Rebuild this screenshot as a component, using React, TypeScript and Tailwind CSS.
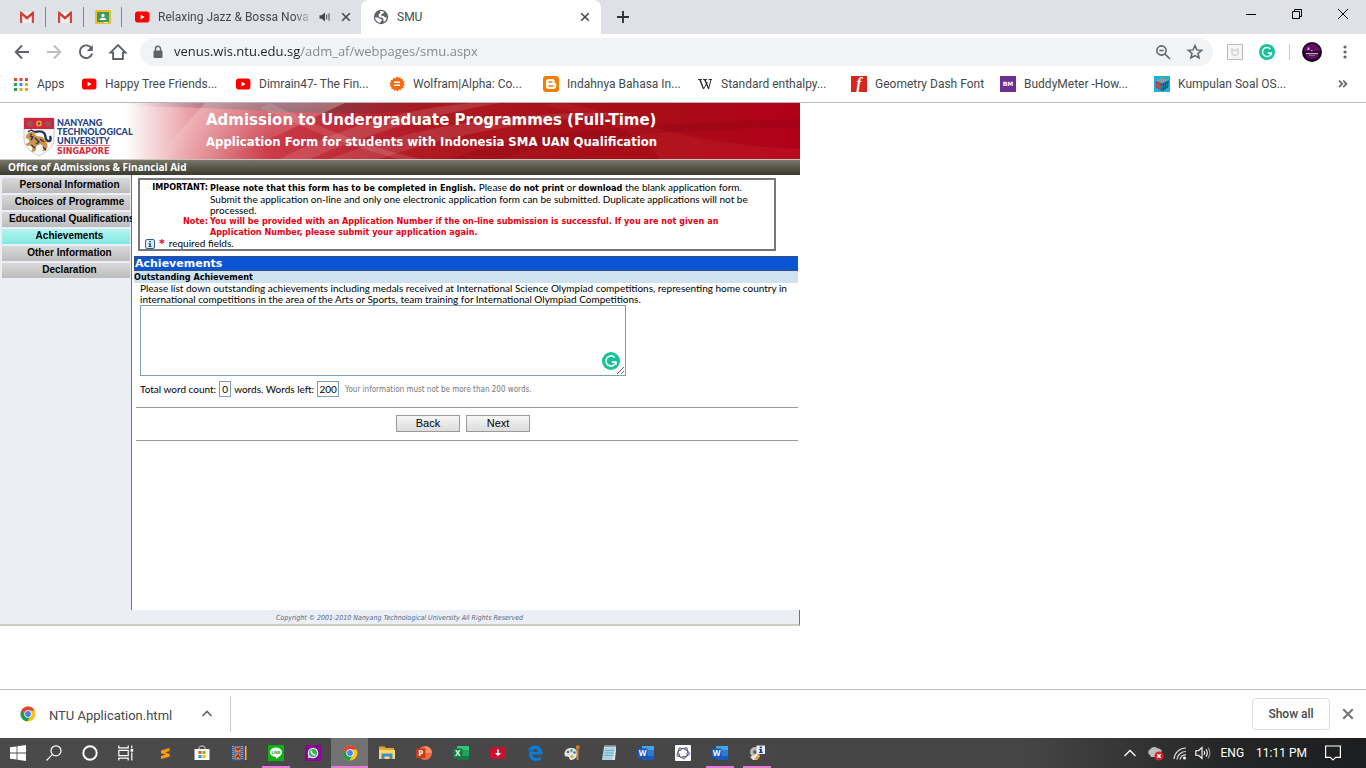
import React, { useState } from "react";

type IconProps = { className?: string };

const YouTube = ({ className = "h-4 w-4" }: IconProps) => (
  <svg viewBox="0 0 16 16" className={className} aria-hidden="true">
    <rect x="1" y="2.6" width="14.4" height="11" rx="2.8" fill="#f00" />
    <path d="M6.6 5.8v4.6l4-2.3z" fill="#fff" />
  </svg>
);

const Gmail = () => (
  <svg viewBox="0 0 16 16" className="h-4 w-4" aria-hidden="true">
    <path d="M1 3h14v11H1z" fill="#f1efee" />
    <path d="M1 14V3.2L8 9l7-5.8V14h-2.2V6.6L8 10.8 3.2 6.6V14z" fill="#d4453a" />
    <path d="M1 3.3V2.6h1.2L8 7.4l5.8-4.8H15v1.6L8 10z" fill="#c7392f" />
  </svg>
);

const Classroom = () => (
  <svg viewBox="0 0 16 16" className="h-4 w-4" aria-hidden="true">
    <rect x="0" y="1" width="16" height="14" rx="1.2" fill="#f2bd2c" />
    <rect x="2" y="3" width="12" height="10" fill="#3c9a5a" />
    <circle cx="8" cy="6.4" r="1.6" fill="#fff" />
    <path d="M4.6 11c.3-1.6 1.8-2.2 3.4-2.2s3.1.6 3.4 2.2z" fill="#fff" />
    <path d="M9 13h3.5v1H9z" fill="#fff" />
  </svg>
);

const Globe = () => (
  <svg viewBox="0 0 16 16" className="h-4 w-4" aria-hidden="true">
    <circle cx="8" cy="8" r="7.2" fill="#5f6368" />
    <path d="M2 8.2 5 8.400l1.500 1.300 2 .3.300 1.500-1.700 1.700v.8C4.400 13.500 2.200 11.300 2 8.200zM7 2.300c1.500-.5 3-.2 4.200.6L10 4.600 8.300 5v1.700l2.600.4 1 1.500 1.900-.4c-.2 2-1.300 3.600-2.600 4.500l-1-.9.300-1.800-1.500-1.500H6.800L5.500 7l.3-2 1.600-.8z" fill="#fff" />
  </svg>
);

const Cross = ({ className = "h-4 w-4" }: IconProps) => (
  <svg viewBox="0 0 16 16" className={className} fill="none" stroke="currentColor" strokeWidth="1.6" aria-hidden="true">
    <path d="m4.200 4.200 7.600 7.600M11.800 4.200l-7.600 7.600" />
  </svg>
);

const Grammarly = ({ className = "h-4 w-4" }: IconProps) => (
  <svg viewBox="0 0 16 16" className={className} aria-hidden="true">
    <circle cx="8" cy="8" r="8" fill="#15c39a" />
    <path d="M11.300 4.900A4.500 4.500 0 1 0 12.400 9H8.800M12.400 8.900v2.400" fill="none" stroke="#fff" strokeWidth="1.400" />
  </svg>
);

const Chrome = ({ className = "h-4 w-4" }: IconProps) => (
  <svg viewBox="0 0 16 16" className={className} aria-hidden="true">
    <circle cx="8" cy="8" r="7.500" fill="#fbc116" />
    <path d="M1.500 4.250A7.500 7.500 0 0 0 7.300 15.460L10.900 9.700 8 8 5 9.700z" fill="#1b9a57" />
    <path d="M8 4.600h6.660A7.500 7.500 0 0 0 1.500 4.250L5 9.700z" fill="#dc4437" />
    <circle cx="8" cy="8" r="3.700" fill="#fff" />
    <circle cx="8" cy="8" r="2.900" fill="#4385f4" />
  </svg>
);

const AppsGrid = () => (
  <svg viewBox="0 0 16 16" className="h-4 w-4" aria-hidden="true">
    <path d="M1 2h3v3H1zM6.500 2h3v3h-3zM12 2h3v3h-3z" fill="#db4437" />
    <path d="M1 7h3v3H1zM1 12h3v3H1z" fill="#27a05b" />
    <path d="M6.500 7h3v3h-3z" fill="#4285f4" />
    <path d="M12 7h3v3h-3zM6.500 12h3v3h-3zM12 12h3v3h-3z" fill="#e9a820" />
  </svg>
);

const Wolfram = () => (
  <svg viewBox="0 0 16 16" className="h-4 w-4" aria-hidden="true">
    <path
      d="m8 .2 1.300 1.700L11.200.900l.6 2 2.100-.1-.2 2.100 2 .7L14.600 7.400 16 9l-1.900 1 .5 2.100-2.100.1-.4 2.100-2-.7L8.500 15.500 7 14l-1.900.9-.7-2-2.100.1.200-2.100-2-.8 1.200-1.700L.200 6.900l1.900-1-.5-2 2.100-.2.500-2 1.900.7z"
      fill="#f96a10"
    />
    <path d="M5 5.500h6V7H5zM5 8.500h6V10H5z" fill="#fff" />
  </svg>
);

const Blogger = () => (
  <svg viewBox="0 0 16 16" className="h-4 w-4" aria-hidden="true">
    <rect width="16" height="16" rx="3" fill="#f57d00" />
    <path d="M6 3h2.800a3 3 0 0 1 3 3v.4c0 .6.400.8.900.8.400 0 .6.200.6.600v2a3.200 3.200 0 0 1-3.200 3.200H6A3 3 0 0 1 3 10V6a3 3 0 0 1 3-3z" fill="#fff" />
    <path d="M6 6h2.600M6 10h4" stroke="#f57d00" strokeWidth="1.500" strokeLinecap="round" />
  </svg>
);

const WikiW = () => (
  <svg viewBox="0 0 16 16" className="h-4 w-4" aria-hidden="true">
    <path d="M1 3.500h4M6 3.500h4M11.500 3.500H15M2.800 3.500 6.500 13l4-7M7.600 3.500l4 9.500 2.400-9.500" fill="none" stroke="#222" strokeWidth=".9" />
    <path d="M2.300 3.500h1.400l2.900 8-.4 1.500zM7.100 3.500h1.400l3.200 8-.4 1.500z" fill="#222" />
  </svg>
);

const FontF = () => (
  <svg viewBox="0 0 16 16" className="h-4 w-4" aria-hidden="true">
    <rect width="16" height="16" fill="#d9261c" />
    <text x="8" y="12.800" textAnchor="middle" fontFamily="Liberation Serif, serif" fontSize="16" fontStyle="italic" fontWeight="700" fill="#fff">f</text>
  </svg>
);

const Buddy = () => (
  <svg viewBox="0 0 16 16" className="h-4 w-4" aria-hidden="true">
    <rect width="16" height="16" fill="#6e2f93" />
    <text x="8" y="10" textAnchor="middle" fontFamily="DejaVu Sans, sans-serif" fontSize="6" fontWeight="700" fill="#fff">BM</text>
  </svg>
);

const Cube = () => (
  <svg viewBox="0 0 16 16" className="h-4 w-4" aria-hidden="true">
    <rect width="16" height="16" fill="#16b3d8" />
    <path d="m2 4.500 6-3 6.500 2.200L8.500 7z" fill="#8e9aa3" />
    <path d="M1.500 5 8 7.500V15l-6-3.500z" fill="#d8242f" />
    <path d="m8.500 7.500 6.300-3L14 11.500 8.500 15z" fill="#173f63" />
    <path d="m1.800 8.300 6.200 3M4 6v6.500M6 7v7M8.500 11l6-3.300M10.500 6.500v7M12.500 5.500v7" stroke="#16b3d8" strokeWidth=".5" />
  </svg>
);

const bookmarks: { label: string; icon: React.ReactNode; width: string }[] = [
  { label: "Happy Tree Friends...", icon: <YouTube />, width: "w-[154px]" },
  { label: "Dimrain47- The Fin...", icon: <YouTube />, width: "w-[154px]" },
  { label: "Wolfram|Alpha: Co...", icon: <Wolfram />, width: "w-[154px]" },
  { label: "Indahnya Bahasa In...", icon: <Blogger />, width: "w-[154px]" },
  { label: "Standard enthalpy...", icon: <WikiW />, width: "w-[154px]" },
  { label: "Geometry Dash Font", icon: <FontF />, width: "w-[149px]" },
  { label: "BuddyMeter -How...", icon: <Buddy />, width: "w-[154px]" },
  { label: "Kumpulan Soal OS...", icon: <Cube />, width: "w-[154px]" },
];

function TabStrip() {
  return (
    <header className="flex h-[34px] items-stretch bg-[#dee1e6] text-[12px] text-[#45494d]">
      <div className="flex items-center pl-2">
        {[
          { name: "Gmail", icon: <Gmail /> },
          { name: "Gmail inbox", icon: <Gmail /> },
          { name: "Classroom", icon: <Classroom /> },
        ].map((t) => (
          <button key={t.name} aria-label={t.name} className="flex h-5 w-[38px] items-center justify-center border-r border-[#83868b]">
            {t.icon}
          </button>
        ))}
      </div>
      <div className="flex w-[239px] items-center pr-[7px] pl-3">
        <YouTube />
        <span className="ml-2 w-[155px] overflow-hidden whitespace-nowrap [mask-image:linear-gradient(to_right,#000_88%,transparent)]">
          Relaxing Jazz &amp; Bossa Nova M
        </span>
        <button aria-label="Mute tab" className="ml-1">
          <svg viewBox="0 0 16 16" className="h-4 w-4" aria-hidden="true">
            <path d="M2.500 6.200h2.200L8 3.500v9L4.700 9.800H2.500z" fill="#45494d" />
            <path d="M9.700 5.500v5M12 4.300v7.400" stroke="#45494d" strokeWidth="1" />
          </svg>
        </button>
        <button aria-label="Close tab" className="ml-auto">
          <Cross />
        </button>
      </div>
      <div className="flex w-[240px] items-center rounded-t-lg bg-white px-2">
        <span className="ml-1">
          <Globe />
        </span>
        <span className="ml-2">SMU</span>
        <button aria-label="Close SMU" className="ml-auto">
          <Cross />
        </button>
      </div>
      <button aria-label="New tab" className="ml-3.5 text-[#333]">
        <svg viewBox="0 0 16 16" className="h-4 w-4" stroke="currentColor" strokeWidth="1.900" aria-hidden="true">
          <path d="M8 2v12M2 8h12" />
        </svg>
      </button>
      <div className="ml-auto flex h-7 text-black">
        <button aria-label="Minimize" className="flex w-[46px] items-center justify-center">
          <svg viewBox="0 0 12 12" className="h-3 w-3" aria-hidden="true">
            <path d="M1 6h10v1H1z" />
          </svg>
        </button>
        <button aria-label="Restore" className="flex w-[46px] items-center justify-center">
          <svg viewBox="0 0 12 12" className="h-3 w-3" fill="none" stroke="currentColor" aria-hidden="true">
            <path d="M1.500 3.500h7v7h-7zM3.500 3.500v-2h7v7h-2" />
          </svg>
        </button>
        <button aria-label="Close window" className="flex w-[46px] items-center justify-center">
          <svg viewBox="0 0 12 12" className="h-3 w-3" fill="none" stroke="currentColor" aria-hidden="true">
            <path d="m1 1 10 10M11 1 1 11" />
          </svg>
        </button>
      </div>
    </header>
  );
}

function Toolbar() {
  const [url, setUrl] = useState("venus.wis.ntu.edu.sg/adm_af/webpages/smu.aspx");
  return (
    <div className="flex h-9 items-center bg-white pr-[13px] pl-3 text-[#5f6368]">
      <nav className="flex items-center gap-3" aria-label="Browser">
        <button aria-label="Back" className="h-5 w-5">
          <svg viewBox="0 0 20 20" className="h-5 w-5" fill="none" stroke="currentColor" strokeWidth="1.900">
            <path d="M17 10H4M10 3.500 3.700 10l6.300 6.500" />
          </svg>
        </button>
        <button aria-label="Forward" className="h-5 w-5 text-[#babcbe]">
          <svg viewBox="0 0 20 20" className="h-5 w-5" fill="none" stroke="currentColor" strokeWidth="1.900">
            <path d="M3 10h13M10 3.500l6.300 6.500-6.300 6.500" />
          </svg>
        </button>
        <button aria-label="Reload" className="h-5 w-5">
          <svg viewBox="0 0 20 20" className="h-5 w-5" fill="none" stroke="currentColor" strokeWidth="1.900">
            <path d="M15.500 6.300A6.300 6.300 0 1 0 16.200 11.500" />
            <path d="M16.800 3v6h-6z" fill="currentColor" stroke="none" />
          </svg>
        </button>
        <button aria-label="Home" className="h-5 w-5">
          <svg viewBox="0 0 20 20" className="h-5 w-5" fill="none" stroke="currentColor" strokeWidth="1.900">
            <path d="M2.500 10.600 10 3l7.500 7.600h-2.600V17H5.100v-6.400z" />
          </svg>
        </button>
      </nav>
      <div className="ml-3 flex h-7 grow items-center rounded-full bg-[#f1f3f4] pr-2 pl-2.5">
        <svg viewBox="0 0 16 16" className="h-4 w-4" aria-hidden="true">
          <rect x="3.500" y="6.500" width="9" height="7.500" rx="1" fill="#5f6368" />
          <path d="M5.500 7V4.700a2.500 2.500 0 0 1 5 0V7" fill="none" stroke="#5f6368" strokeWidth="1.400" />
        </svg>
        <input
          aria-label="Address"
          value={url}
          onChange={(e) => setUrl(e.target.value)}
          className="ml-2 grow bg-[linear-gradient(to_right,#202124_126px,#80868b_126px)] bg-clip-text font-['Open_Sans',sans-serif] text-[13px] text-transparent caret-black outline-none"
        />
        <button aria-label="Zoom" className="h-5 w-5">
          <svg viewBox="0 0 20 20" className="h-5 w-5" fill="none" stroke="currentColor" strokeWidth="1.600">
            <circle cx="8.500" cy="8.500" r="4.600" />
            <path d="m12 12 5 5M6.300 8.500h4.400" />
          </svg>
        </button>
        <button aria-label="Bookmark this page" className="ml-3 h-5 w-5">
          <svg viewBox="0 0 20 20" className="h-5 w-5" fill="none" stroke="currentColor" strokeWidth="1.500">
            <path d="m10 3.600 1.900 4.300 4.700.4-3.600 3.100 1.100 4.600-4.100-2.400L5.900 16 7 11.400 3.400 8.300l4.700-.4z" />
          </svg>
        </button>
      </div>
      <button aria-label="Shield extension" className="ml-3.5 h-4 w-4">
        <svg viewBox="0 0 16 16" className="h-4 w-4" fill="#f6f6f6" stroke="#b9bbbd">
          <path d="M.5.500h15v15H.500z" />
          <path d="M5 5v5l3 1.800 3-1.800V5L8 6.500z" fill="none" stroke="#d5d5d5" strokeWidth="1.500" />
        </svg>
      </button>
      <button aria-label="Grammarly" className="ml-4 h-4 w-4">
        <Grammarly />
      </button>
      <span className="mr-3 ml-3.5 h-4 w-px bg-[#c6c8ca]" />
      <button aria-label="Profile" className="h-5 w-5">
        <svg viewBox="0 0 20 20" className="h-5 w-5">
          <circle cx="10" cy="10" r="10" fill="#1c0520" />
          <path d="M2 7a9 9 0 0 1 16 0l-2 8a9 9 0 0 1-12 0z" fill="#660a68" />
          <path d="M3 9h14v4H3z" fill="#2c0a30" />
          <path d="M5.500 5.500h2v2.500h-2zM9 8h1.500v1H9zM4 11h12v1.200H4zM7 13.500h6v.6H7z" fill="#d9a9da" />
        </svg>
      </button>
      <button aria-label="Menu" className="ml-[15px] h-5 w-4">
        <svg viewBox="0 0 16 20" className="h-5 w-4" fill="currentColor">
          <circle cx="8" cy="5" r="1.600" />
          <circle cx="8" cy="10" r="1.600" />
          <circle cx="8" cy="15" r="1.600" />
        </svg>
      </button>
    </div>
  );
}

function BookmarkBar() {
  return (
    <nav aria-label="Bookmarks" className="flex h-[33px] items-center overflow-hidden border-b border-[#b6b7ba] bg-white pb-1 pl-[13px] text-[12px] whitespace-nowrap text-[#45494d]">
      <a href="#apps" className="flex w-[68px] shrink-0 items-center gap-2">
        <AppsGrid />
        Apps
      </a>
      {bookmarks.map((b) => (
        <a key={b.label} href="#bookmark" className={`flex shrink-0 items-center gap-2 ${b.width}`}>
          {b.icon}
          {b.label}
        </a>
      ))}
      <button aria-label="More bookmarks" className="mr-[18px] ml-auto">
        <svg viewBox="0 0 10 10" className="h-2.5 w-2.5" fill="none" stroke="#5f6368" strokeWidth="1.700">
          <path d="m1 1.500 3.200 3.300L1 8.200M5.200 1.500l3.200 3.300-3.200 3.400" />
        </svg>
      </button>
    </nav>
  );
}

const Crest = () => (
  <svg viewBox="0 0 32 40" className="h-10 w-8" role="img" aria-label="University crest">
    <path d="M1 1h30v21c0 9-8 13-15 17C9 35 1 31 1 22z" fill="#fbfafa" stroke="#b8b8c4" strokeWidth=".8" />
    <path d="M1 1h30v11H1z" fill="#d5223f" />
    <path d="M3.500 6.500l2-2.500h3l2 2.500-2 3h-3zM21.500 6.500l2-2.500h3l2 2.500-2 3h-3z" fill="#8f5a55" />
    <circle cx="16" cy="6.500" r="3" fill="#e0a13a" />
    <circle cx="16" cy="6.500" r="1.200" fill="#7b3b32" />
    <path d="M12 15c4-1 7-1 9 1 3 3 0 7 4 8 3 1 3-3 2-5" fill="none" stroke="#24345c" strokeWidth="2.400" />
    <path d="M3.500 18c2-3 6-4 8-2l2 3 6 1 4 4 1 6-2 4h-3l1-4-3-3-4 2-1 5-4 1 1-4-1-3-4 1-2-2 4-2-1-3-3-1z" fill="#cf9345" />
    <path d="M7 19l3 1-2 3M12 21l4 4-3 2M17 22l4 3M8 28l4 3M20 30l3 3M5 15l3-2 4 2" fill="none" stroke="#24345c" strokeWidth="1.400" />
    <circle cx="8" cy="17.500" r="1" fill="#463a3a" />
  </svg>
);

function Banner() {
  return (
    <div className="relative flex h-14 items-center overflow-hidden bg-[linear-gradient(to_right,#fff_0,#fff_125px,#e9a0a6_190px,#cb3b48_270px,#b01a23_420px,#a81019_560px,#a90b17_680px,#b2001a_800px)] text-white">
      <svg viewBox="0 0 800 56" preserveAspectRatio="none" className="absolute inset-0 h-full w-full" aria-hidden="true">
        <defs>
          <linearGradient id="glow" x1="0" y1="0" x2="0" y2="1">
            <stop offset="0" stopColor="#fff" stopOpacity=".28" />
            <stop offset="1" stopColor="#fff" stopOpacity="0" />
          </linearGradient>
          <linearGradient id="shade" x1="0" x2="1">
            <stop offset="0" stopColor="#6b6f7a" stopOpacity="0" />
            <stop offset=".5" stopColor="#6b4a55" stopOpacity=".8" />
            <stop offset="1" stopColor="#7a0a14" stopOpacity="0" />
          </linearGradient>
        </defs>
        <path d="M130 0h320c-60 20-180 5-320 3z" fill="url(#shade)" />
        <path d="M205 0h140c-40 18-80 42-130 56h-60z" fill="url(#glow)" />
        <path d="M280 56C350 20 410 6 470 0h30C430 12 370 30 310 56z" fill="#fff" opacity=".12" />
        <path d="M270 0c50 24 90 42 150 56h-22C345 42 305 25 260 5z" fill="#fff" opacity=".12" />
        <path d="M330 56C440 14 540 8 640 10 540 16 450 30 380 56z" fill="#fff" opacity=".1" />
        <path d="M560 0c50 4 100 40 240 46v10H660C640 30 600 12 540 2z" fill="#e03b44" opacity=".18" />
        <path d="M450 56c70-26 170-34 350-40v8C660 28 560 34 500 56z" fill="#7c0610" opacity=".22" />
      </svg>
      <div className="relative flex w-[206px] shrink-0 items-center pt-3 pl-[23px]">
        <Crest />
        <div className="ml-0.5 font-['Lato',sans-serif] text-[9px] leading-[9px] font-black text-[#25417f]">
          <div>NANYANG</div>
          <div>TECHNOLOGICAL</div>
          <div className="flex">
            <span className="border-b border-[#e0747c]">UNIVERSITY</span>
          </div>
          <div className="pt-0.5 font-['DejaVu_Sans',sans-serif] text-[8px] leading-[8px] font-bold text-[#d8283c]">SINGAPORE</div>
        </div>
      </div>
      <div className="relative font-bold whitespace-nowrap">
        <h1 className="text-[15px] leading-[22px]">Admission to Undergraduate Programmes (Full-Time)</h1>
        <h2 className="font-['DejaVu_Sans_Condensed','DejaVu_Sans',sans-serif] text-[13px] leading-[22px]">
          Application Form for students with Indonesia SMA UAN Qualification
        </h2>
      </div>
    </div>
  );
}

const menu = ["Personal Information", "Choices of Programme", "Educational Qualifications", "Achievements", "Other Information", "Declaration"];

const Strong = ({ children, className = "" }: { children: React.ReactNode; className?: string }) => (
  <b className={`font-['DejaVu_Sans_Condensed','DejaVu_Sans',sans-serif] text-[9px] font-bold ${className}`}>{children}</b>
);

function ApplicationPage() {
  const [text, setText] = useState("");
  const words = text.trim() ? text.trim().split(/\s+/).length : 0;
  return (
    <div className="w-full max-w-[800px] font-['DejaVu_Sans',sans-serif] text-[10px] leading-[11px] text-black">
      <Banner />
      <div className="h-4 border-t border-[#c9c2b8] bg-linear-to-b from-[#77776a] to-[#3a3a2d] pl-2 font-['Open_Sans',sans-serif] text-[10px] leading-[14px] font-bold text-white">
        Office of Admissions &amp; Financial Aid
      </div>
      <div className="flex min-h-[435px]">
        <nav aria-label="Form sections" className="flex w-[132px] shrink-0 flex-col gap-0.5 border-r border-[#6f7278] bg-[#ebeff5] pt-[3px] pr-px pl-0.5">
          {menu.map((m) => (
            <a
              key={m}
              href="#section"
              className={`h-[15px] pl-[7px] text-center font-['Liberation_Sans',sans-serif] text-[10px] leading-[14px] font-bold whitespace-nowrap ${
                m === "Achievements" ? "bg-linear-to-b from-[#b4f4ef] to-[#80e8e2]" : "bg-linear-to-b from-[#d9d9d9] to-[#bcbcbc]"
              }`}
            >
              {m}
            </a>
          ))}
        </nav>
        <main className="min-w-0 grow bg-white pt-[3px] pr-0.5 pl-0.5 font-['Lato',sans-serif]">
          <section className="mr-[22px] ml-1 border-2 border-[#777] pt-0.5">
            <div className="grid grid-cols-[68px_1fr] gap-x-0.5">
              <Strong className="text-right">IMPORTANT:</Strong>
              <div>
                <p>
                  <Strong>Please note that this form has to be completed in English.</Strong> Please <Strong>do not print</Strong> or <Strong>download</Strong> the blank
                  application form.
                </p>
                <p>Submit the application on-line and only one electronic application form can be submitted. Duplicate applications will not be</p>
                <p>processed.</p>
              </div>
              <Strong className="text-right text-[#e8000f]">Note:</Strong>
              <Strong className="text-[#e8000f]">
                You will be provided with an Application Number if the on-line submission is successful. If you are not given an
                <br />
                Application Number, please submit your application again.
              </Strong>
            </div>
            <div className="flex items-center gap-1 pl-[5px]">
              <svg viewBox="0 0 10 10" className="h-2.5 w-2.5" aria-hidden="true">
                <rect x=".5" y=".5" width="9" height="9" rx="1.500" fill="#dbeaf8" stroke="#31618f" />
                <path d="M4.200 2h1.600v1.200H4.200zM3.500 4.200h2.300v3h.8V8H3.400v-.8h.8V5h-.7z" fill="#174a80" />
              </svg>
              <b className="font-['DejaVu_Sans',sans-serif] text-[11px] text-[#e8000f]">*</b>
              required fields.
            </div>
          </section>
          <h3 className="mt-[5px] border border-[#39527e] bg-[#0a55d3] font-['DejaVu_Sans',sans-serif] text-[11px] leading-[13px] font-bold text-white">Achievements</h3>
          <h4 className="bg-[#cfe2f0] font-['DejaVu_Sans_Condensed','DejaVu_Sans',sans-serif] text-[9px] leading-3 font-bold">Outstanding Achievement</h4>
          <form className="pl-1.5" onSubmit={(e) => e.preventDefault()}>
            <label htmlFor="achievement" className="block">
              Please list down outstanding achievements including medals received at International Science Olympiad competitions, representing home country in
              <br />
              international competitions in the area of the Arts or Sports, team training for International Olympiad Competitions.
            </label>
            <div className="relative w-[486px] max-w-full">
              <textarea
                id="achievement"
                value={text}
                onChange={(e) => setText(e.target.value)}
                className="block h-[71px] w-full resize border border-[#7f9db9] bg-white p-0.5"
              />
              <span className="absolute right-1.5 bottom-1.5">
                <Grammarly className="h-[18px] w-[18px]" />
              </span>
            </div>
            <div className="mt-[5px] flex items-center">
              <label htmlFor="count">Total word count:</label>
              <input id="count" readOnly value={words} className="mx-[3px] h-4 w-3 border border-[#7f9db9] text-center" />
              <label htmlFor="left">words. Words left:</label>
              <input id="left" readOnly value={200 - words} className="ml-[3px] h-4 w-[22px] border border-[#7f9db9] text-center" />
              <span className="ml-1.5 font-['DejaVu_Sans_Condensed','DejaVu_Sans',sans-serif] text-[8px] text-[#777]">
                Your information must not be more than 200 words.
              </span>
            </div>
          </form>
          <hr className="mt-2.5 ml-0.5 border-[#9a9a9a]" />
          <div className="flex justify-center gap-1.5 pt-[7px] pb-2 pr-1.5 font-['Liberation_Sans',sans-serif] text-[11px]">
            <button className="h-[17px] w-16 border border-[#9b9b9b] bg-linear-to-b from-[#f6f6f6] to-[#dcdcdc]">Back</button>
            <button className="h-[17px] w-16 border border-[#9b9b9b] bg-linear-to-b from-[#f6f6f6] to-[#dcdcdc]">Next</button>
          </div>
          <hr className="ml-0.5 border-[#9a9a9a]" />
        </main>
      </div>
      <footer className="h-4 border-r border-b-2 border-r-[#6f7278] border-b-[#cccfbd] bg-[#ebeff5] text-center font-['DejaVu_Sans_Condensed','DejaVu_Sans',sans-serif] text-[7px] leading-4 text-[#4f6a86] italic">
        Copyright © 2001-2010 Nanyang Technological University All Rights Reserved
      </footer>
    </div>
  );
}

function Downloads() {
  return (
    <aside aria-label="Downloads" className="flex h-[49px] items-center border-t border-[#b6b7ba] bg-white text-[#45494d]">
      <a href="#download" className="flex w-[184px] items-center pl-5 text-[13px] whitespace-nowrap">
        <Chrome />
        <span className="mt-1 ml-[13px]">NTU Application.html</span>
      </a>
      <button aria-label="Download options" className="flex h-9 w-[47px] items-center justify-center border-r border-[#c6c8ca]">
        <svg viewBox="0 0 12 12" className="h-3 w-3" fill="none" stroke="#5f6368" strokeWidth="1.600">
          <path d="m1.500 8 4.500-4.500L10.500 8" />
        </svg>
      </button>
      <button className="ml-auto h-8 w-[78px] rounded border border-[#dadce0] text-[12px] font-medium text-[#45494d]">Show all</button>
      <button aria-label="Close downloads" className="mr-2 ml-2 text-[#6f7377]">
        <Cross className="h-5 w-5" />
      </button>
    </aside>
  );
}

const Office = ({ letter, dark, mid, light }: { letter: string; dark: string; mid: string; light: string }) => (
  <svg viewBox="0 0 16 16" className="h-4 w-4" aria-hidden="true">
    <path d="M4 1h12v14H4z" fill={mid} />
    <path d="M4 1h12v4H4z" fill={light} />
    <path d="M4 11h12v4H4z" fill={dark} />
    <rect y="3.500" width="9.500" height="9.500" rx=".6" fill={dark} />
    <text x="4.700" y="11.200" textAnchor="middle" fontFamily="Open Sans, sans-serif" fontSize="8" fontWeight="700" fill="#fff">{letter}</text>
  </svg>
);

const WordIcon = () => <Office letter="W" dark="#185abd" mid="#2b7cd3" light="#41a5ee" />;

const apps: { name: string; state?: "open" | "active"; icon: React.ReactNode }[] = [
  {
    name: "Sublime Text",
    icon: (
      <svg viewBox="0 0 16 16" className="h-4 w-4">
        <rect x="2" y="1" width="13" height="14" rx="1.500" fill="#4b4b4b" />
        <path d="M4 5.500 12.500 3v3L8 7.500l4.500 1.200v3L4 14v-3l4.500-1.400L4 8.300z" fill="#ff9b0b" />
      </svg>
    ),
  },
  {
    name: "Store",
    icon: (
      <svg viewBox="0 0 16 16" className="h-4 w-4">
        <path d="M5 5V2.800C5 .5 11 .5 11 2.800V5" fill="none" stroke="#ddd" />
        <path d="M.5 4h15v11h-15z" fill="#fff" />
        <path d="M4.500 6h3v3h-3z" fill="#f25022" />
        <path d="M8.500 6h3v3h-3z" fill="#7fba00" />
        <path d="M4.500 10h3v3h-3z" fill="#00a4ef" />
        <path d="M8.500 10h3v3h-3z" fill="#ffb900" />
      </svg>
    ),
  },
  {
    name: "Movie Maker",
    icon: (
      <svg viewBox="0 0 16 16" className="h-4 w-4">
        <path d="M1 .500h11v15H1z" fill="#2167ad" />
        <path d="M3.500 1.500h6v6h-6zM3.500 8.500h6v6h-6z" fill="#e9793c" />
        <path d="m5 3 2 2 2-2M5 13l2-3 2 3" fill="none" stroke="#742a22" strokeWidth="1.200" />
        <path d="M2 1v14M11 1v14" stroke="#b8dcff" strokeDasharray="1 1" />
        <path d="M12 1h1.500v14H12z" fill="#ba3338" />
        <path d="M14 1h1.500v14H14z" fill="#f1b927" />
      </svg>
    ),
  },
  {
    name: "LINE",
    state: "open",
    icon: (
      <svg viewBox="0 0 16 16" className="h-4 w-4">
        <rect width="16" height="16" fill="#0db30d" />
        <path d="M8 2.500c3.500 0 6 2.200 6 4.800 0 2.300-2.500 4.600-6 6.700v-2c-3.500 0-6-2.200-6-4.700s2.500-4.800 6-4.800z" fill="#fff" />
        <text x="8" y="9" textAnchor="middle" fontSize="4" fontWeight="700" fontFamily="Liberation Sans, sans-serif" fill="#0a9a0a">LINE</text>
      </svg>
    ),
  },
  {
    name: "WhatsApp",
    icon: (
      <svg viewBox="0 0 16 16" className="h-4 w-4">
        <rect width="16" height="16" fill="#8c0095" />
        <circle cx="8" cy="8" r="4.700" fill="#34b257" stroke="#e6f4e8" strokeWidth="1.200" />
        <path d="m2.700 13.500 1-3.500 2 2z" fill="#e6f4e8" />
        <path d="M6.200 5.800c0 2.400 1.700 4.200 4 4.200" fill="none" stroke="#fff" strokeWidth="1.600" />
      </svg>
    ),
  },
  { name: "Chrome", state: "active", icon: <Chrome /> },
  {
    name: "File Explorer",
    icon: (
      <svg viewBox="0 0 16 16" className="h-4 w-4">
        <path d="M0 1.500h5.500L7 3h8v11H0z" fill="#e8a72c" />
        <path d="M0 5h16v9H0z" fill="#ffd868" />
        <path d="M2.500 14V8.500h11V14h-3v-2.500h-5V14z" fill="#3b8fd4" />
      </svg>
    ),
  },
  {
    name: "PowerPoint",
    icon: (
      <svg viewBox="0 0 16 16" className="h-4 w-4">
        <circle cx="9" cy="8" r="7" fill="#ed6c47" />
        <path d="M9 1a7 7 0 0 1 7 7H9z" fill="#ff8f6b" />
        <rect y="3.500" width="9.500" height="9.500" rx=".6" fill="#c43e1c" />
        <text x="4.700" y="11.200" textAnchor="middle" fontFamily="Open Sans, sans-serif" fontSize="8" fontWeight="700" fill="#fff">P</text>
      </svg>
    ),
  },
  { name: "Excel", icon: <Office letter="X" dark="#107c41" mid="#21a366" light="#33c481" /> },
  {
    name: "Downloader",
    icon: (
      <svg viewBox="0 0 16 16" className="h-4 w-4">
        <rect y="2" width="16" height="12" rx="2.500" fill="#c4122f" />
        <path d="M7.200 4.500h1.600V8H11l-3 3.300L5 8h2.200z" fill="#fff" />
      </svg>
    ),
  },
  {
    name: "Edge",
    icon: (
      <svg viewBox="0 0 16 16" className="h-4 w-4">
        <path
          d="M.700 7.100C1.400 2.900 4.200.500 8.100.500c4.600 0 7.200 3.300 7.200 7.200v1.700H5.400c.1 2.500 2.200 3.500 4.400 3.500 1.700 0 3.200-.5 4.300-1.200v3.100c-1.300.7-3 1.200-4.900 1.200-4.200 0-7.200-2.500-7.200-6.500 0-2.500 1.300-4.600 3.600-5.600C3.400 4.400 1.600 5.500.700 7.100zM5.500 6.800h5.600c0-1.900-1-2.900-2.600-2.900-1.700 0-2.800 1.100-3 2.900z"
          fill="#0b7bd6"
        />
      </svg>
    ),
  },
  {
    name: "Paint",
    icon: (
      <svg viewBox="0 0 16 16" className="h-4 w-4">
        <path d="M7 3c4 0 6.500 2 6.500 5.500S10.500 15 7 15c-2 0-1-2.500-2.500-3S.5 12 .5 9C.5 5 3.500 3 7 3z" fill="#d8e8f4" />
        <circle cx="4" cy="7" r="1.300" fill="#d2393c" />
        <circle cx="7.500" cy="5.500" r="1.300" fill="#3e9f48" />
        <circle cx="10.500" cy="7.500" r="1.300" fill="#2d73c4" />
        <circle cx="8" cy="11.500" r="1.500" fill="#e5ad28" />
        <path d="M12.500 5h2v10h-2zM12 .500h3.500v4H12z" fill="#d17d2e" />
      </svg>
    ),
  },
  {
    name: "Notepad",
    icon: (
      <svg viewBox="0 0 16 16" className="h-4 w-4">
        <path d="M3 2h12l-1.500 13H1z" fill="#a9d5e4" />
        <path d="m14 3 1 0-1 12h-3z" fill="#e0e4e5" />
        <path d="M4 5.500h9M3.700 8h9M3.400 10.500h9" stroke="#72abc0" />
        <path d="M3.500 1.500h12" stroke="#eee" strokeWidth="2.500" strokeDasharray="1 1" />
      </svg>
    ),
  },
  { name: "Word", icon: <WordIcon /> },
  {
    name: "GeoGebra",
    icon: (
      <svg viewBox="0 0 16 16" className="h-4 w-4">
        <rect width="16" height="16" rx="1" fill="#fff" />
        <ellipse cx="8" cy="8" rx="5.200" ry="4.500" fill="none" stroke="#43466b" strokeWidth="1.200" />
        <g fill="#b6b9df" stroke="#43466b" strokeWidth=".7">
          <circle cx="5" cy="4.200" r="1.400" />
          <circle cx="11" cy="3.900" r="1.400" />
          <circle cx="13.200" cy="8.600" r="1.400" />
          <circle cx="8.800" cy="12.500" r="1.400" />
          <circle cx="3.200" cy="10" r="1.400" />
        </g>
      </svg>
    ),
  },
  { name: "Word document", state: "open", icon: <WordIcon /> },
  {
    name: "Information",
    state: "open",
    icon: (
      <svg viewBox="0 0 16 16" className="h-4 w-4">
        <circle cx="6" cy="7" r="5" fill="#b8b8b8" />
        <circle cx="6" cy="7" r="1.800" fill="#555" />
        <path d="m1 12 6-3 4 2-3 4H4z" fill="#ede6d3" />
        <path d="m5 14 4-4 2 1-3 4z" fill="#e6a12a" />
        <path d="M7.500.500H16V9H7.500z" fill="#e7effb" />
        <path d="M10.800 1.500h2v1.500h-2zM10.300 3.800h2.500v3h.8V8h-3.400V6.800h.8V5h-.7z" fill="#15338d" />
      </svg>
    ),
  },
];

function Taskbar() {
  return (
    <footer className="flex h-[30px] items-stretch bg-[linear-gradient(to_right,#4a4a4a_0,#454545_75%,#242526_90%,#1d1e1f_100%)] text-white">
      <button aria-label="Start" className="flex w-9 items-center justify-center">
        <svg viewBox="0 0 16 16" className="h-4 w-4" fill="#fff">
          <path d="M0 2.300 6.600 1.400v6.200H0zM7.400 1.300 16 0v7.600H7.400zM0 8.400h6.600v6.200L0 13.700zM7.400 8.400H16V16l-8.600-1.300z" />
        </svg>
      </button>
      <button aria-label="Search" className="flex w-9 items-center justify-center">
        <svg viewBox="0 0 16 16" className="h-4 w-4" fill="none" stroke="#fff" strokeWidth="1.200">
          <circle cx="10" cy="5.800" r="5" />
          <path d="M6.500 9.400.500 15.500" />
        </svg>
      </button>
      <button aria-label="Cortana" className="flex w-9 items-center justify-center">
        <svg viewBox="0 0 16 16" className="h-4 w-4" fill="none" stroke="#fff" strokeWidth="1.900">
          <circle cx="8" cy="8" r="6.700" />
        </svg>
      </button>
      <button aria-label="Task view" className="mr-0.5 flex w-9 items-center justify-center">
        <svg viewBox="0 0 16 16" className="h-4 w-4" fill="none" stroke="#fff" strokeWidth="1.200">
          <path d="M.8.500v2.300h9.400V.500M.800 5.300h9.400v5.400H.800zM.800 15.500v-2.300h9.400v2.300M13.800.500v3M13.800 7.500v8" />
          <path d="M12.500 4h2.700v2.700h-2.700z" fill="#fff" stroke="none" />
        </svg>
      </button>
      {apps.map((a) => (
        <button
          key={a.name}
          aria-label={a.name}
          className={`flex w-[37px] flex-col items-center justify-between pt-[7px] ${a.state === "active" ? "bg-[#727272]" : ""}`}
        >
          {a.icon}
          <span className={`h-0.5 ${a.state === "active" ? "w-full bg-[#e879d8]" : a.state === "open" ? "w-7 bg-[#e879d8]" : "w-7"}`} />
        </button>
      ))}
      <div className="ml-auto flex items-center text-[12px]">
        <button aria-label="Show hidden icons" className="mr-2.5">
          <svg viewBox="0 0 14 14" className="h-3.5 w-3.5" fill="none" stroke="#fff" strokeWidth="1.300">
            <path d="m1.500 10 5.500-5.500L12.500 10" />
          </svg>
        </button>
        <button aria-label="OneDrive" className="mr-2">
          <svg viewBox="0 0 18 16" className="h-4 w-[18px]">
            <path d="M3 10a3 3 0 0 1 0-5.500A5 5 0 0 1 11 3.500c3 0 4 2 3.500 4L9 12H4z" fill="#bdbdbd" />
            <circle cx="12" cy="11" r="4.500" fill="#d3242c" />
            <path d="m10.300 9.300 3.400 3.400M13.700 9.300l-3.400 3.400" stroke="#fff" strokeWidth="1.300" />
          </svg>
        </button>
        <button aria-label="Network" className="mr-2">
          <svg viewBox="0 0 14 14" className="h-3.5 w-3.5" fill="none" stroke="#ddd" strokeWidth="1.200">
            <path d="M1 13A12 12 0 0 1 13 2M4 13.500A9 9 0 0 1 13 5.500M7 13.500A6 6 0 0 1 13 8.800" />
            <circle cx="11.500" cy="12" r="1.500" fill="#fff" stroke="none" />
          </svg>
        </button>
        <button aria-label="Volume" className="mr-2.5">
          <svg viewBox="0 0 16 16" className="h-4 w-4" fill="none" stroke="#fff" strokeWidth="1.100">
            <path d="M.8 5.700h2.700L7 2.500v11L3.500 10.300H.800zM9 6c.9 1.300.9 2.700 0 4M11 4.300c1.800 2.500 1.800 4.900 0 7.400" />
            <path d="M13 2.700c2.600 3.500 2.600 7.100 0 10.600" stroke="#999" />
          </svg>
        </button>
        <span>ENG</span>
        <time className="ml-3">11:11 PM</time>
        <button aria-label="Notifications" className="mr-[25px] ml-[18px]">
          <svg viewBox="0 0 16 16" className="h-4 w-4" fill="none" stroke="#fff" strokeWidth="1.200">
            <path d="M.6 1h14.800v11.400h-4.700L8 15l-2.700-2.600H.600z" />
          </svg>
        </button>
      </div>
    </footer>
  );
}

export default function App() {
  return (
    <div className="flex min-h-screen flex-col bg-white font-['Roboto',sans-serif]">
      <TabStrip />
      <Toolbar />
      <BookmarkBar />
      <div className="grow">
        <ApplicationPage />
      </div>
      <Downloads />
      <Taskbar />
    </div>
  );
}
